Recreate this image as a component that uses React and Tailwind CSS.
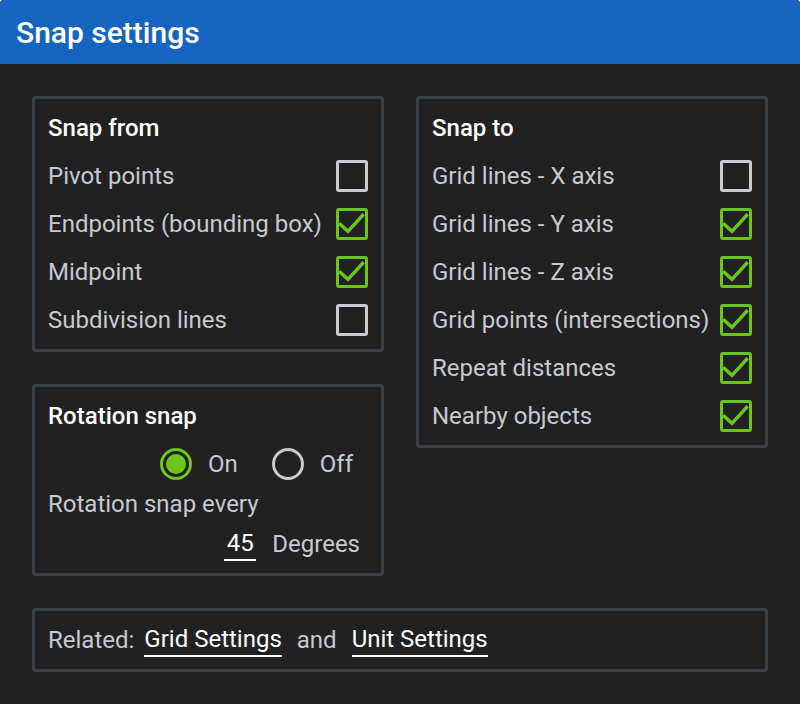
import React, { useState } from "react";

const font = { fontFamily: "Roboto, 'Noto Sans', sans-serif" };

function Check({ checked }) {
  return (
    <span
      className={`flex h-8 w-8 shrink-0 items-center justify-center rounded-[3px] border-[3px] ${
        checked ? "border-[#6cc51b]" : "border-[#c8ccd2]"
      }`}
    >
      {checked && (
        <svg width="26" height="26" viewBox="0 0 26 26" fill="none">
          <path
            d="M1.5 13.5 L9 20.3 L23.5 4.5"
            stroke="#6cc51b"
            strokeWidth="3.4"
            strokeLinecap="square"
          />
        </svg>
      )}
    </span>
  );
}

function Row({ label, checked }) {
  return (
    <div className="flex h-12 items-center justify-between">
      <span className="text-[24px] text-[#c5c9d0]">{label}</span>
      <Check checked={checked} />
    </div>
  );
}

function Panel({ title, children, className = "" }) {
  return (
    <div
      className={`rounded-[4px] border-[3px] border-[#3a4148] px-[13px] pt-[13px] pb-[5px] ${className}`}
    >
      <div className="flex h-8 items-center text-[24px] font-medium text-white">
        {title}
      </div>
      <div className="mt-2">{children}</div>
    </div>
  );
}

function Radio({ on }) {
  return (
    <span
      className={`flex h-8 w-8 items-center justify-center rounded-full border-[3px] ${
        on ? "border-[#6cc51b]" : "border-[#c8ccd2]"
      }`}
    >
      {on && <span className="h-5 w-5 rounded-full bg-[#6cc51b]" />}
    </span>
  );
}

export default function App() {
  const snapFrom = [
    ["Pivot points", false],
    ["Endpoints (bounding box)", true],
    ["Midpoint", true],
    ["Subdivision lines", false],
  ];
  const snapTo = [
    ["Grid lines - X axis", false],
    ["Grid lines - Y axis", true],
    ["Grid lines - Z axis", true],
    ["Grid points (intersections)", true],
    ["Repeat distances", true],
    ["Nearby objects", true],
  ];
  const [rot, setRot] = useState(true);

  return (
    <div
      style={font}
      className="h-[704px] w-[800px] overflow-hidden rounded-t-[4px] bg-[#212121]"
    >
      <div className="flex h-16 items-center bg-[#1565c0] px-4 text-[30px] font-medium text-white">
        Snap settings
      </div>

      <div className="px-8 pt-8">
        <div className="flex items-start gap-8">
          <div className="flex w-[352px] flex-col gap-8">
            <Panel title="Snap from">
              {snapFrom.map(([l, c]) => (
                <Row key={l} label={l} checked={c} />
              ))}
            </Panel>

            <div className="h-48 rounded-[4px] border-[3px] border-[#3a4148] px-[13px] pt-[13px]">
              <div className="flex h-8 items-center text-[24px] font-medium text-white">
                Rotation snap
              </div>
              <div className="mt-3 flex h-10 items-center justify-end pr-[15px] text-[24px] text-[#c5c9d0]">
                <button
                  onClick={() => setRot(true)}
                  className="flex items-center gap-4"
                >
                  <Radio on={rot} />
                  <span>On</span>
                </button>
                <button
                  onClick={() => setRot(false)}
                  className="ml-[34px] flex items-center gap-4"
                >
                  <Radio on={!rot} />
                  <span>Off</span>
                </button>
              </div>
              <div className="flex h-10 items-center text-[24px] text-[#c5c9d0]">
                Rotation snap every
              </div>
              <div className="flex h-10 items-center justify-end gap-4 pr-[8px] text-[24px] text-[#c5c9d0]">
                <span className="w-8 border-b-2 border-white text-center leading-8 text-white">
                  45
                </span>
                <span>Degrees</span>
              </div>
            </div>
          </div>

          <Panel title="Snap to" className="w-[352px]">
            {snapTo.map(([l, c]) => (
              <Row key={l} label={l} checked={c} />
            ))}
          </Panel>
        </div>

        <div className="mt-8 flex h-16 items-center rounded-[4px] border-[3px] border-[#3a4148] px-[13px] text-[24px] text-[#c5c9d0]">
          <span>Related:</span>
          <a className="ml-[10px] border-b-2 border-white leading-8 text-white">
            Grid Settings
          </a>
          <span className="mx-[15px]">and</span>
          <a className="border-b-2 border-white leading-8 text-white">
            Unit Settings
          </a>
        </div>
      </div>
    </div>
  );
}
